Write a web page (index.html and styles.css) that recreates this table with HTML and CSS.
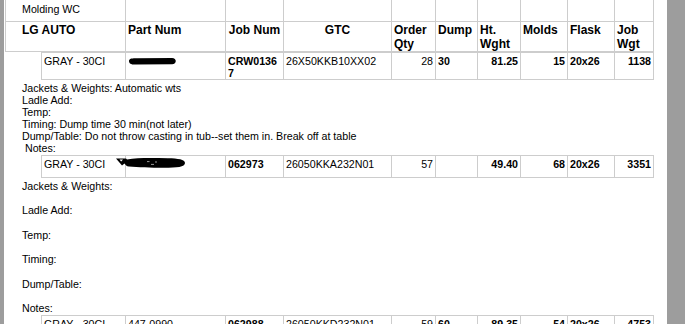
FILE: index.html
```html
<!DOCTYPE html>
<html lang="en">
<head>
  <meta charset="UTF-8">
  <title>Molding WC - Pour Sheet</title>
  <link rel="stylesheet" href="styles.css">
</head>
<body>

<div class="sheet">

  <table class="grid head">
    <colgroup>
      <col class="c-line"><col class="c-part"><col class="c-job"><col class="c-gtc"><col class="c-qty">
      <col class="c-dump"><col class="c-ht"><col class="c-molds"><col class="c-flask"><col class="c-wgt">
    </colgroup>
    <tr class="wc">
      <td class="first">Molding WC</td><td></td><td></td><td></td><td></td>
      <td></td><td></td><td></td><td></td><td></td>
    </tr>
    <tr>
      <th class="first">LG AUTO</th>
      <th>Part Num</th>
      <th class="mid">Job Num</th>
      <th class="mid">GTC</th>
      <th>Order Qty</th>
      <th>Dump</th>
      <th>Ht. Wght</th>
      <th>Molds</th>
      <th>Flask</th>
      <th>Job Wgt</th>
    </tr>
  </table>

  <table class="grid job">
    <colgroup>
      <col class="c-metal"><col class="c-part"><col class="c-job"><col class="c-gtc"><col class="c-qty">
      <col class="c-dump"><col class="c-ht"><col class="c-molds"><col class="c-flask"><col class="c-wgt">
    </colgroup>
    <tr>
      <td>GRAY - 30CI</td>
      <td class="part">
        <svg class="scribble one" width="50" height="9" viewBox="0 0 50 9">
          <path d="M1 4 C1 1.5 4 1 9 1.2 L44 1 C49 1 49 7 44 7.2 L8 7.6 C3 7.8 1 6.5 1 4 Z" fill="#000"/>
        </svg>
      </td>
      <td class="b brk">CRW01367</td>
      <td>26X50KKB10XX02</td>
      <td class="r">28</td>
      <td class="b">30</td>
      <td class="b r">81.25</td>
      <td class="b r">15</td>
      <td class="b">20x26</td>
      <td class="b r">1138</td>
    </tr>
  </table>

  <div class="fields">
    <div>Jackets &amp; Weights: Automatic wts</div>
    <div>Ladle Add:</div>
    <div>Temp:</div>
    <div>Timing: Dump time 30 min(not later)</div>
    <div>Dump/Table: Do not throw casting in tub--set them in. Break off at table</div>
    <div>&nbsp;Notes:</div>
  </div>

  <table class="grid job">
    <colgroup>
      <col class="c-metal"><col class="c-part"><col class="c-job"><col class="c-gtc"><col class="c-qty">
      <col class="c-dump"><col class="c-ht"><col class="c-molds"><col class="c-flask"><col class="c-wgt">
    </colgroup>
    <tr>
      <td>GRAY - 30CI</td>
      <td class="part">
        <svg class="scribble two" width="70" height="12" viewBox="0 0 70 12">
          <path d="M0 1.5 L10 1.5 L11 2.5 C22 0.5 36 1 52 1.2 C62 1.3 69 2.5 69 6 C69 10 61 10.8 48 10.8 C34 10.8 22 10.2 13 9.5 C10.5 9.3 9.5 8 8.5 6.5 L6 8.5 Z" fill="#000"/>
          <path d="M3.5 2.6 L7 2.6 L5.2 4.6 Z" fill="#fff"/>
          <path d="M31 4.6 L33.5 4.6 M39 5 L41 5 M35 7.4 L38 7.4" stroke="#fff" stroke-width="0.6" fill="none"/>
        </svg>
      </td>
      <td class="b">062973</td>
      <td>26050KKA232N01</td>
      <td class="r">57</td>
      <td class="b"></td>
      <td class="b r">49.40</td>
      <td class="b r">68</td>
      <td class="b">20x26</td>
      <td class="b r">3351</td>
    </tr>
  </table>

  <div class="fields blank">
    <div>Jackets &amp; Weights:</div>
    <div>Ladle Add:</div>
    <div>Temp:</div>
    <div>Timing:</div>
    <div>Dump/Table:</div>
    <div>Notes:</div>
  </div>

  <table class="grid job">
    <colgroup>
      <col class="c-metal"><col class="c-part"><col class="c-job"><col class="c-gtc"><col class="c-qty">
      <col class="c-dump"><col class="c-ht"><col class="c-molds"><col class="c-flask"><col class="c-wgt">
    </colgroup>
    <tr>
      <td>GRAY - 30CI</td>
      <td>447-0990</td>
      <td class="b">062988</td>
      <td>26050KKD232N01</td>
      <td class="r">59</td>
      <td class="b">60</td>
      <td class="b r">89.35</td>
      <td class="b r">54</td>
      <td class="b">20x26</td>
      <td class="b r">4753</td>
    </tr>
  </table>

</div>

</body>
</html>
```

FILE: styles.css
```css
html, body {
  margin: 0;
  height: 324px;
  overflow: hidden;
}

body {
  background-color: #9d9d9d;
  font-family: Arial, "Liberation Sans", sans-serif;
  font-size: 8pt;
  color: #000;
}

.sheet {
  margin-left: 4px;
  width: 663px;
  height: 324px;
  padding-left: 1px;
  box-sizing: border-box;
  background-color: #fff;
  overflow: hidden;
}

table.grid {
  border-collapse: collapse;
  table-layout: fixed;
}

table.grid td,
table.grid th {
  border: 1px solid #cdcdcd;
  padding: 2px 2px 0;
  vertical-align: top;
  text-align: left;
  overflow: visible;
}

/* header block */
table.head {
  width: 649px;
}

table.head tr.wc td {
  border-top: 0;
  height: 18px;
  padding-top: 3px;
}

table.head th {
  font-size: 9pt;
  font-weight: bold;
  height: 28px;
  padding-top: 1px;
}

table.head .first {
  padding-left: 16px;
}

table.head th.mid {
  text-align: center;
}

/* one row per job */
table.job {
  width: 613px;
  margin-left: 36px;
}

table.job tr {
  height: 22px;
}

table.job td.b {
  font-weight: bold;
}

table.job td.r {
  text-align: right;
}

table.job td.brk {
  word-break: break-all;
}

table.job td.part {
  position: relative;
}

.scribble {
  position: absolute;
  display: block;
}

.scribble.one {
  left: 2px;
  top: 4px;
}

.scribble.two {
  left: -10px;
  top: 1px;
}

/* column widths */
.c-line  { width: 120px; }
.c-metal { width: 84px; }
.c-part  { width: 100px; }
.c-job   { width: 58px; }
.c-gtc   { width: 108px; }
.c-qty   { width: 44px; }
.c-dump  { width: 42px; }
.c-ht    { width: 43px; }
.c-molds { width: 47px; }
.c-flask { width: 47px; }
.c-wgt   { width: 39px; }

/* pour instructions under each job */
.fields {
  margin: 2px 0 1px 17px;
}

.fields.blank {
  margin: 2px 0 1px 17px;
}

.fields.blank div + div {
  margin-top: 12.4px;
}
```
